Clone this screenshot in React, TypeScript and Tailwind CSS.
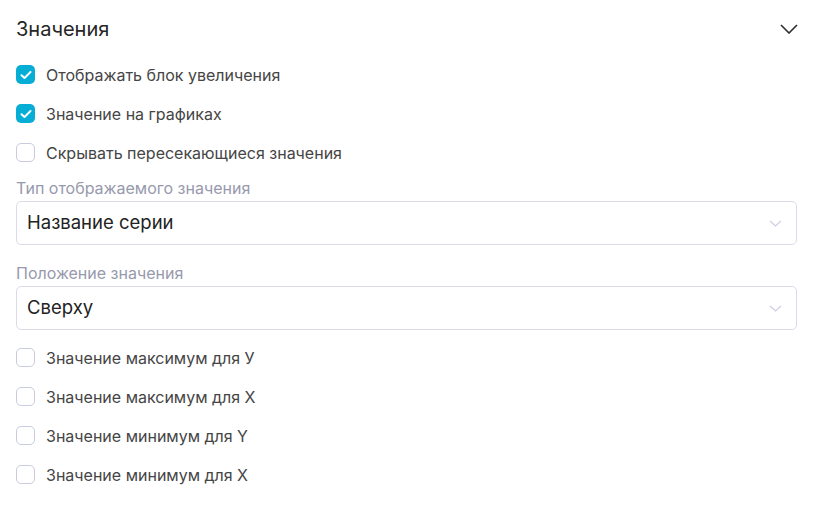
import React from "react";

interface CheckRowProps {
  label: string;
  checked?: boolean;
}

function CheckRow({ label, checked }: CheckRowProps) {
  return (
    <label className="flex h-[39px] items-center gap-[11px]">
      <span
        className={
          checked
            ? "flex h-[19px] w-[19px] items-center justify-center rounded-[5px] bg-[#06aed5]"
            : "flex h-[19px] w-[19px] items-center justify-center rounded-[5px] border border-[#c9cbe0] bg-white"
        }
      >
        {checked && (
          <svg width="12" height="10" viewBox="0 0 12 10" fill="none">
            <path
              d="M1.5 5.2L4.5 8L10.5 2"
              stroke="white"
              strokeWidth="2"
              strokeLinecap="round"
              strokeLinejoin="round"
            />
          </svg>
        )}
      </span>
      <span className="text-[16px] text-[#454545]">{label}</span>
    </label>
  );
}

interface SelectFieldProps {
  label: string;
  value: string;
}

function SelectField({ label, value }: SelectFieldProps) {
  return (
    <div className="flex flex-col">
      <div className="h-[20px] text-[16px] leading-[20px] text-[#9799ad]">{label}</div>
      <div className="mt-[3px] flex h-[44px] items-center justify-between rounded-[5px] border border-[#dddbe9] pl-[10px] pr-[14px]">
        <span className="text-[18.5px] text-[#222]">{value}</span>
        <svg width="13" height="7" viewBox="0 0 13 7" fill="none">
          <path d="M1 1L6.5 6L12 1" stroke="#cfcfe0" strokeWidth="1.2" />
        </svg>
      </div>
    </div>
  );
}

export default function App() {
  return (
    <div
      className="h-[509px] w-[815px] bg-white pl-4 pr-[18px]"
      style={{ fontFamily: "Inter, 'Noto Sans', sans-serif" }}
    >
      <div className="flex h-[55px] items-center justify-between pt-[3px]">
        <span className="text-[20px] text-[#262626]">Значения</span>
        <svg width="18" height="10" viewBox="0 0 18 10" fill="none" className="mr-[-1px]">
          <path d="M1 1L9 9L17 1" stroke="#2d2d2d" strokeWidth="1.6" />
        </svg>
      </div>

      <CheckRow label="Отображать блок увеличения" checked />
      <CheckRow label="Значение на графиках" checked />
      <CheckRow label="Скрывать пересекающиеся значения" />

      <div className="mt-[6px]">
        <SelectField label="Тип отображаемого значения" value="Название серии" />
      </div>
      <div className="mt-[18px]">
        <SelectField label="Положение значения" value="Сверху" />
      </div>

      <div className="mt-2">
        <CheckRow label="Значение максимум для У" />
        <CheckRow label="Значение максимум для X" />
        <CheckRow label="Значение минимум для Y" />
        <CheckRow label="Значение минимум для X" />
      </div>
    </div>
  );
}
